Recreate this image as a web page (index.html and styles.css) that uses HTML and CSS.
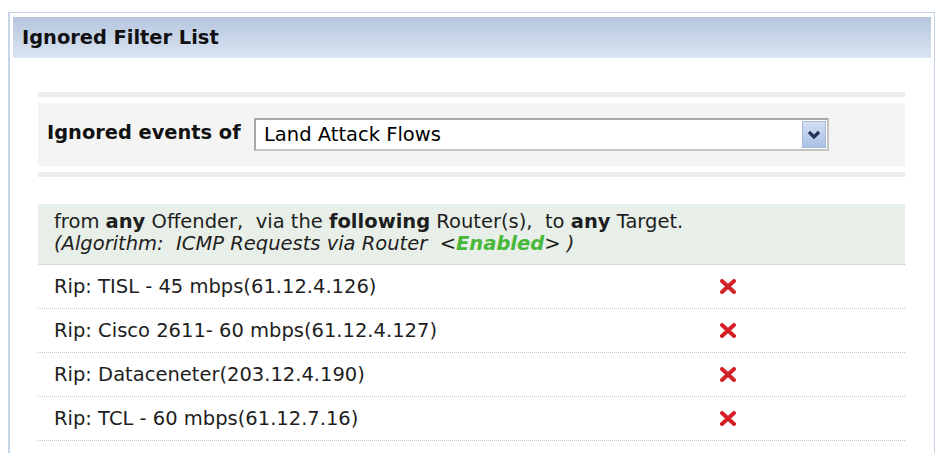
FILE: index.html
```html
<!DOCTYPE html>
<html>
<head>
<meta charset="utf-8">
<link rel="stylesheet" href="styles.css">
</head>
<body>
<div class="panel">
  <div class="panel-head">Ignored Filter List</div>
  <div class="content">
    <div class="bar"></div>
    <div class="filter-box">
      <span class="filter-label">Ignored events of</span>
      <div class="select">
        <span class="select-text">Land Attack Flows</span>
        <span class="select-btn">
          <svg width="14" height="10" viewBox="0 0 14 10"><path d="M2 2 L7 7 L12 2" fill="none" stroke="#27315a" stroke-width="3.2"/></svg>
        </span>
      </div>
    </div>
    <div class="bar"></div>
    <div class="info">
      <div class="info-line">from <b>any</b> Offender,&nbsp; via the <b>following</b> Router(s),&nbsp; to <b>any</b> Target.</div>
      <div class="info-line algo">(Algorithm:&nbsp; ICMP Requests via Router&nbsp; &lt;<b class="enabled">Enabled</b>&gt; )</div>
    </div>
    <div class="row"><span class="row-text">Rip: TISL - 45 mbps(61.12.4.126)</span><span class="del"><svg width="18" height="15" viewBox="0 0 18 15"><path d="M3 2 L15 13 M15 2 L3 13" stroke="#d42127" stroke-width="4" stroke-linecap="round"/></svg></span></div>
    <div class="row"><span class="row-text">Rip: Cisco 2611- 60 mbps(61.12.4.127)</span><span class="del"><svg width="18" height="15" viewBox="0 0 18 15"><path d="M3 2 L15 13 M15 2 L3 13" stroke="#d42127" stroke-width="4" stroke-linecap="round"/></svg></span></div>
    <div class="row"><span class="row-text">Rip: Dataceneter(203.12.4.190)</span><span class="del"><svg width="18" height="15" viewBox="0 0 18 15"><path d="M3 2 L15 13 M15 2 L3 13" stroke="#d42127" stroke-width="4" stroke-linecap="round"/></svg></span></div>
    <div class="row"><span class="row-text">Rip: TCL - 60 mbps(61.12.7.16)</span><span class="del"><svg width="18" height="15" viewBox="0 0 18 15"><path d="M3 2 L15 13 M15 2 L3 13" stroke="#d42127" stroke-width="4" stroke-linecap="round"/></svg></span></div>
  </div>
</div>
</body>
</html>
```
FILE: styles.css
```css
html, body {
  margin: 0;
  padding: 0;
  background: #ffffff;
}
body {
  font-family: "DejaVu Sans", Verdana, sans-serif;
  color: #1e1e1e;
}
.panel {
  margin: 12px 0 0 8px;
  width: 918px;
  height: 436px;
  border: 1px solid #c7d4e8;
  border-left-width: 2px;
  border-bottom: none;
  padding: 4px 3px 0 3px;
}
.panel-head {
  height: 41px;
  box-sizing: border-box;
  padding-left: 9px;
  display: flex;
  align-items: center;
  font-weight: bold;
  font-size: 19.4px;
  color: #111;
  background: linear-gradient(#b6c6de, #dae4f2);
}
.content {
  margin: 34px 26px 0 25px;
}
.bar {
  height: 5px;
  background: #ececec;
}
.filter-box {
  margin: 6px 0;
  height: 63px;
  background: #f4f4f4;
  display: flex;
  align-items: center;
  padding-left: 9px;
}
.filter-label {
  font-weight: bold;
  font-size: 19.4px;
  color: #111;
  width: 207px;
  padding-bottom: 4px;
}
.select {
  width: 562px;
  height: 29px;
  border: 2px solid #a8a8a8;
  border-right-color: #c4c4c4;
  border-bottom-color: #c4c4c4;
  background: #fff;
  display: flex;
  align-items: center;
  justify-content: space-between;
  padding: 0 1px 0 8px;
}
.select-text {
  font-size: 19.5px;
  color: #000;
}
.select-btn {
  width: 24px;
  height: 27px;
  box-sizing: border-box;
  border: 1px solid #aabbd8;
  background: linear-gradient(#d3e0f3, #a9bfe5);
  display: flex;
  align-items: center;
  justify-content: center;
}
.info {
  margin-top: 27px;
  background: #e8efe8;
  padding: 7px 16px 9px;
  border-bottom: 1px dotted #c4c4c4;
  font-size: 19.5px;
}
.info-line {
  line-height: 22px;
}
.algo {
  font-style: italic;
}
.enabled {
  color: #47b83a;
}
.row {
  height: 43px;
  border-bottom: 1px dotted #c4c4c4;
  display: flex;
  align-items: center;
  padding-left: 16px;
  font-size: 19.5px;
}
.row-text {
  width: 665px;
}
.del {
  display: flex;
}
```
